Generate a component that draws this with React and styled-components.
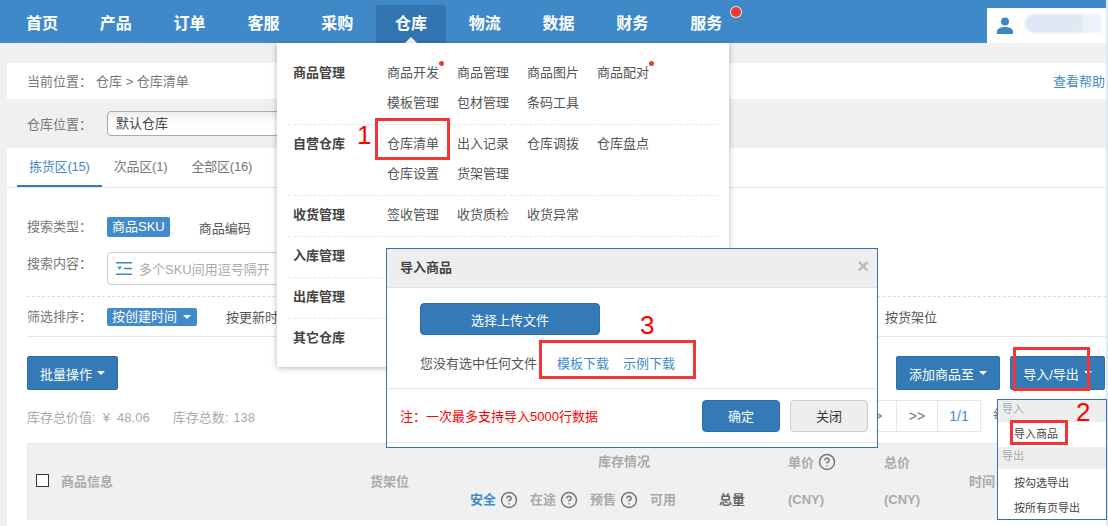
import styled, { createGlobalStyle } from "styled-components";
import { CircleHelp } from "lucide-react";

const GlobalStyle = createGlobalStyle`
  html, body {
    margin: 0;
    width: 1108px;
    height: 526px;
    overflow: hidden;
    background: #dfe9f5;
    font-family: "Liberation Sans", "Noto Sans CJK SC", sans-serif;
    font-size: 13px;
    color: #555;
  }
  * { box-sizing: border-box; }
`;

const COLON = "\uFF1A";

const NAV = ["首页", "产品", "订单", "客服", "采购", "仓库", "物流", "数据", "财务", "服务"];

const MENU = [
  { title: "商品管理", items: [["商品开发", true], ["商品管理"], ["商品图片"], ["商品配对", true], ["模板管理"], ["包材管理"], ["条码工具"]] },
  { title: "自营仓库", items: [["仓库清单"], ["出入记录"], ["仓库调拨"], ["仓库盘点"], ["仓库设置"], ["货架管理"]] },
  { title: "收货管理", items: [["签收管理"], ["收货质检"], ["收货异常"]] },
  { title: "入库管理", items: [] },
  { title: "出库管理", items: [] },
  { title: "其它仓库", items: [] },
];

export default function App() {
  return (
    <Page>
      <GlobalStyle />
      <Nav>
        {NAV.map((name) => (
          <NavItem key={name} $active={name === "仓库"} $badge={name === "服务"}>
            {name}
          </NavItem>
        ))}
        <UserBox>
          <svg width="16" height="17" viewBox="0 0 16 17" fill="#3c86c8">
            <circle cx="8" cy="4.5" r="4" />
            <path d="M0 17v-2.5C0 11.5 3.5 10 8 10s8 1.500 8 4.500V17z" />
          </svg>
          <BlurName />
        </UserBox>
      </Nav>

      <Breadcrumb>
        <Crumbs>
          <span>当前位置{COLON}</span>
          <span>仓库 &gt; 仓库清单</span>
        </Crumbs>
        <HelpLink>查看帮助</HelpLink>
      </Breadcrumb>

      <WarehouseRow>
        <span>仓库位置{COLON}</span>
        <WarehouseSelect>默认仓库</WarehouseSelect>
      </WarehouseRow>

      <Tabs>
        <Tab $active>拣货区(15)</Tab>
        <Tab>次品区(1)</Tab>
        <Tab>全部区(16)</Tab>
      </Tabs>

      <Content>
        <TypeRow>
          <FieldLabel>搜索类型{COLON}</FieldLabel>
          <Pill>商品SKU</Pill>
          <TypeOption>商品编码</TypeOption>
        </TypeRow>
        <SearchRow>
          <FieldLabel>搜索内容{COLON}</FieldLabel>
          <SearchBox>
            <svg width="16" height="13" viewBox="0 0 16 13">
              <path d="M0 .75h16M0 12.250h16M8 6.500h8" stroke="#3c86c8" strokeWidth="1.500" />
              <path d="M1 4.500h5L3.500 8z" fill="#25b8c4" />
            </svg>
            多个SKU间用逗号隔开
          </SearchBox>
        </SearchRow>
        <SortRow>
          <FieldLabel>筛选排序{COLON}</FieldLabel>
          <SortPill>
            按创建时间
            <Caret />
          </SortPill>
          <SortOption>按更新时间</SortOption>
          <SortOption>按商品SKU</SortOption>
          <ShelfOption>按货架位</ShelfOption>
        </SortRow>

        <ActionRow>
          <ActionButton>
            批量操作
            <Caret />
          </ActionButton>
          <ActionGroup>
            <ActionButton>
              添加商品至
              <Caret />
            </ActionButton>
            <ImportButton>
              导入/导出
              <Caret />
            </ImportButton>
          </ActionGroup>
        </ActionRow>

        <StatsRow>
          <Stats>
            <span>
              库存总价值:<StatValue $gap={7}>¥{"\u00A0\u00A0"}48.06</StatValue>
            </span>
            <span>
              库存总数:<StatValue $gap={5}>138</StatValue>
            </span>
          </Stats>
          <Pager>
            <PagerCell $w={37}>&gt;</PagerCell>
            <PagerCell $w={41}>&gt;&gt;</PagerCell>
            <PagerCell $w={43} $current>1/1</PagerCell>
            <PagerSize>每页50条</PagerSize>
          </Pager>
        </StatsRow>

        <TableHead>
          <CheckCol>
            <CheckBox />
          </CheckCol>
          <InfoCol>商品信息</InfoCol>
          <ShelfCol>货架位</ShelfCol>
          <StockCol>
            <StockTitle>库存情况</StockTitle>
            <StockRow>
              <StockCell $accent>安全<HelpIcon size={18} /></StockCell>
              <StockCell>在途<HelpIcon size={18} /></StockCell>
              <StockCell>预售<HelpIcon size={18} /></StockCell>
              <StockCell $w={69}>可用</StockCell>
              <StockCell $dark>总量</StockCell>
            </StockRow>
          </StockCol>
          <PriceCol $w={96}>
            <HeadLine>单价<HelpIcon size={18} /></HeadLine>
            <HeadLine>(CNY)</HeadLine>
          </PriceCol>
          <PriceCol $w={85}>
            <HeadLine>总价</HeadLine>
            <HeadLine>(CNY)</HeadLine>
          </PriceCol>
          <span>时间</span>
        </TableHead>
      </Content>

      <MegaMenu>
        {MENU.map((group) => (
          <MenuSection key={group.title}>
            <MenuTitle>{group.title}</MenuTitle>
            <MenuItems>
              {group.items.map(([label, dot]) => (
                <MenuLink key={label} $dot={dot}>
                  <span>{label}</span>
                </MenuLink>
              ))}
            </MenuItems>
          </MenuSection>
        ))}
      </MegaMenu>

      <Dialog>
        <DialogHead>
          导入商品
          <CloseMark>×</CloseMark>
        </DialogHead>
        <DialogBody>
          <UploadButton>选择上传文件</UploadButton>
          <FileRow>
            您没有选中任何文件
            <DownloadLink>模板下载</DownloadLink>
            <DownloadLink>示例下载</DownloadLink>
          </FileRow>
        </DialogBody>
        <DialogFoot>
          <Note>注{COLON}一次最多支持导入5000行数据</Note>
          <ConfirmButton>确定</ConfirmButton>
          <CloseButton>关闭</CloseButton>
        </DialogFoot>
      </Dialog>

      <ImportMenu>
        <ImportHead>导入</ImportHead>
        <ImportItem>导入商品</ImportItem>
        <ImportHead>导出</ImportHead>
        <ExportList>
          <ImportItem>按勾选导出</ImportItem>
          <ImportItem>按所有页导出</ImportItem>
        </ExportList>
      </ImportMenu>

      <RedBox $x={375} $y={118} $w={75} $h={42} />
      <RedBox $x={539} $y={340} $w={157} $h={39} />
      <RedBox $x={1013} $y={347} $w={77} $h={44} />
      <RedBox $x={1010} $y={420} $w={58} $h={25} />
      <RedNumber $x={357} $y={120}>1</RedNumber>
      <RedNumber $x={1076} $y={397}>2</RedNumber>
      <RedNumber $x={640} $y={310}>3</RedNumber>
    </Page>
  );
}

const Page = styled.div`
  position: relative;
  width: 1106px;
  height: 526px;
  background: #f0f0f0;
  overflow: visible;
`;

const Nav = styled.nav`
  display: flex;
  align-items: flex-end;
  gap: 3.8px;
  height: 43px;
  padding-left: 7px;
  background: #4089c9;
`;

const NavItem = styled.div`
  position: relative;
  width: 70px;
  height: 38px;
  padding-top: 7px;
  text-align: center;
  font-size: 16px;
  font-weight: 700;
  line-height: 24px;
  color: #fff;
  background: ${(p) => (p.$active ? "#3375b1" : "transparent")};
  border-radius: 3px 3px 0 0;

  ${(p) =>
    p.$active &&
    `&::after {
      content: "";
      position: absolute;
      left: 29px;
      bottom: 0;
      border: 6px solid transparent;
      border-top: 0;
      border-bottom-color: #fff;
    }`}

  ${(p) =>
    p.$badge &&
    `&::after {
      content: "";
      position: absolute;
      left: 60px;
      top: 2px;
      width: 10px;
      height: 10px;
      border-radius: 50%;
      background: #ee3a32;
      box-shadow: 0 0 0 1px #dfeaf5;
    }`}
`;

const UserBox = styled.div`
  display: flex;
  align-items: center;
  gap: 12px;
  width: 119px;
  height: 35px;
  margin-left: auto;
  padding: 0 0 0 10px;
  background: #fff;
`;

const BlurName = styled.div`
  width: 76px;
  height: 19px;
  margin-top: -5px;
  border-radius: 10px 0 0 10px;
  background: linear-gradient(90deg, #dde8f4 0%, #dfe9f4 75%, #eaf2fa 76%, #eef4fb 100%);
  filter: blur(1px);
`;

const Breadcrumb = styled.div`
  display: flex;
  justify-content: space-between;
  align-items: center;
  height: 36px;
  margin: 20px 0 0 7px;
  padding: 0 1px 1px 20px;
  background: #fff;
  color: #777;
`;

const Crumbs = styled.div`
  display: flex;
  gap: 4px;
`;

const HelpLink = styled.a`
  color: #428bca;
`;

const WarehouseRow = styled.div`
  display: flex;
  align-items: center;
  height: 49px;
  margin-left: 7px;
  padding-left: 20px;
  gap: 15px;
  color: #777;
`;

const WarehouseSelect = styled.div`
  width: 240px;
  height: 25px;
  padding-left: 8px;
  line-height: 24px;
  color: #444;
  border: 1px solid #aaa;
  border-radius: 4px;
  background: linear-gradient(#eee, #fff 50%);
`;

const Tabs = styled.div`
  display: flex;
  height: 40px;
  margin-left: 7px;
  padding-left: 10px;
  background: #fff;
  border-bottom: 1px solid #e6e6e6;
`;

const Tab = styled.div`
  height: 39px;
  padding: 0 12px;
  line-height: 38px;
  letter-spacing: -0.2px;
  color: ${(p) => (p.$active ? "#428bca" : "#777")};
  border-bottom: ${(p) => (p.$active ? "2px solid #337ab7" : "0")};
`;

const Content = styled.div`
  height: 338px;
  margin-left: 7px;
  padding: 29px 0 0 20px;
  background: #fff;
`;

const FieldLabel = styled.span`
  width: 80px;
  flex: none;
  line-height: 18px;
  color: #777;
`;

const TypeRow = styled.div`
  display: flex;
  align-items: center;
  height: 20px;
`;

const Pill = styled.span`
  height: 20px;
  padding: 0 5px;
  line-height: 20px;
  color: #fff;
  background: #428bca;
  border-radius: 2px;
`;

const TypeOption = styled.span`
  margin-left: 29px;
  color: #555;
`;

const SearchRow = styled.div`
  display: flex;
  height: 33px;
  margin-top: 15px;

  ${FieldLabel} {
    line-height: 24px;
  }
`;

const SearchBox = styled.div`
  display: flex;
  align-items: center;
  gap: 7px;
  width: 240px;
  height: 33px;
  padding-left: 8px;
  color: #aaa;
  border: 1px solid #ccc;
  border-radius: 4px;
`;

const SortRow = styled.div`
  display: flex;
  align-items: center;
  height: 41px;
  margin-top: 11px;
  padding-right: 169px;
  border-top: 1px dashed #ddd;
  border-bottom: 1px solid #e5e5e5;
`;

const SortPill = styled(Pill)`
  display: flex;
  align-items: center;
  gap: 5px;
  height: 18px;
  padding: 0 6px 0 5px;
  line-height: 18px;
`;

const SortOption = styled.span`
  margin-left: 29px;
  color: #555;
`;

const ShelfOption = styled(SortOption)`
  margin-left: auto;
`;

const Caret = styled.i`
  display: inline-block;
  width: 0;
  height: 0;
  margin-left: 1px;
  border: 4px solid transparent;
  border-top-color: #fff;
  border-bottom: 0;
`;

const ActionRow = styled.div`
  display: flex;
  justify-content: space-between;
  height: 34px;
  margin-top: 19px;
`;

const ActionGroup = styled.div`
  display: flex;
  gap: 10px;
  padding-right: 1px;
`;

const ActionButton = styled.button`
  display: flex;
  align-items: center;
  justify-content: center;
  gap: 4px;
  height: 34px;
  padding: 0 12px;
  font: inherit;
  color: #fff;
  background: #337ab7;
  border: 1px solid #2e6da4;
  border-radius: 2px;
`;

const ImportButton = styled(ActionButton)`
  width: 95px;
  padding: 0;
`;

const StatsRow = styled.div`
  display: flex;
  justify-content: space-between;
  height: 32px;
  margin-top: 10px;
`;

const Stats = styled.div`
  display: flex;
  align-items: center;
  gap: 23px;
  color: #aaa;
`;

const StatValue = styled.span`
  margin-left: ${(p) => p.$gap}px;
`;

const Pager = styled.div`
  display: flex;
  height: 32px;
  font-size: 14px;
`;

const PagerCell = styled.span`
  width: ${(p) => p.$w}px;
  line-height: 30px;
  text-align: center;
  color: ${(p) => (p.$current ? "#428bca" : "#777")};
  border: 1px solid #e5e5e5;
  border-left-width: 0;
`;

const PagerSize = styled.span`
  width: 125px;
  padding-left: 12px;
  white-space: nowrap;
  line-height: 30px;
  font-size: 13px;
  color: #777;
`;

const TableHead = styled.div`
  display: flex;
  align-items: center;
  height: 77px;
  margin-top: 11px;
  padding-bottom: 3px;
  font-weight: 700;
  color: #aaa;
  background: #f0f0f0;
  border-top: 1px solid #e8e8e8;
  border-left: 1px solid #e8e8e8;
`;

const CheckCol = styled.div`
  width: 33px;
  padding-left: 8px;
`;

const CheckBox = styled.div`
  width: 13px;
  height: 13px;
  background: #fff;
  border: 1px solid #333;
`;

const InfoCol = styled.div`
  width: 309px;
`;

const ShelfCol = styled.div`
  width: 100px;
`;

const StockCol = styled.div`
  width: 318px;
`;

const StockTitle = styled.div`
  height: 38px;
  padding-left: 128px;
  line-height: 38px;
`;

const StockRow = styled.div`
  display: flex;
  height: 38px;
  line-height: 38px;
`;

const StockCell = styled.span`
  display: flex;
  align-items: center;
  gap: 4px;
  width: ${(p) => p.$w || 60}px;
  color: ${(p) => (p.$accent ? "#428bca" : p.$dark ? "#666" : "#aaa")};
`;

const HelpIcon = styled(CircleHelp)`
  flex: none;
  color: #777;
  stroke-width: 2;
`;

const PriceCol = styled.div`
  width: ${(p) => p.$w}px;
`;

const HeadLine = styled.div`
  display: flex;
  align-items: center;
  gap: 4px;
  height: 38px;
`;

const MegaMenu = styled.div`
  position: absolute;
  left: 277px;
  top: 43px;
  width: 452px;
  height: 324px;
  padding-top: 11px;
  background: #fff;
  box-shadow: 0 1px 6px rgba(40, 50, 80, 0.35);
`;

const MenuSection = styled.div`
  display: flex;
  margin: 0 11px;
  padding: 4px 0 6px 5px;
  border-bottom: 1px dashed #e8e8e8;

  &:last-child {
    border-bottom: 0;
  }
`;

const MenuTitle = styled.div`
  width: 94px;
  flex: none;
  font-weight: 700;
  line-height: 30px;
  color: #444;
`;

const MenuItems = styled.div`
  display: flex;
  flex-wrap: wrap;
  width: 280px;
  min-height: 30px;
`;

const MenuLink = styled.div`
  width: 70px;
  line-height: 30px;
  color: #555;

  span {
    position: relative;
  }

  ${(p) =>
    p.$dot &&
    `span::after {
      content: "";
      position: absolute;
      right: -5px;
      top: -4px;
      width: 5px;
      height: 5px;
      border-radius: 50%;
      background: #ee3a32;
    }`}
`;

const Dialog = styled.div`
  position: absolute;
  left: 386px;
  top: 248px;
  width: 492px;
  height: 200px;
  background: #fff;
  border: 1px solid #3a70a8;
`;

const DialogHead = styled.div`
  display: flex;
  justify-content: space-between;
  align-items: center;
  height: 39px;
  padding: 0 8px 3px 13px;
  font-weight: 700;
  color: #444;
  background: #eee;
  border-bottom: 1px solid #e2e2e2;
`;

const CloseMark = styled.span`
  font-size: 20px;
  color: #bbb;
`;

const DialogBody = styled.div`
  height: 101px;
  padding: 15px 0 0 33px;
  border-bottom: 1px solid #e2e2e2;
`;

const UploadButton = styled.button`
  display: block;
  width: 180px;
  height: 32px;
  font: inherit;
  color: #fff;
  background: #337ab7;
  border: 1px solid #2e6da4;
  border-radius: 4px;
`;

const FileRow = styled.div`
  display: flex;
  gap: 14px;
  margin-top: 20px;
  line-height: 18px;
  color: #555;
`;

const DownloadLink = styled.a`
  color: #428bca;

  &:first-of-type {
    margin-left: 6px;
  }
`;

const DialogFoot = styled.div`
  display: flex;
  align-items: center;
  gap: 10px;
  height: 54px;
  padding: 0 9px 0 13px;
  border-bottom: 1px solid #e8e8e8;
`;

const Note = styled.span`
  margin-right: auto;
  color: #f00;
`;

const ConfirmButton = styled.button`
  width: 78px;
  height: 32px;
  font: inherit;
  color: #fff;
  background: #337ab7;
  border: 1px solid #2e6da4;
  border-radius: 4px;
`;

const CloseButton = styled(ConfirmButton)`
  color: #333;
  background: #eee;
  border-color: #ccc;
`;

const ImportMenu = styled.div`
  position: absolute;
  left: 997px;
  top: 399px;
  width: 110px;
  height: 121px;
  font-size: 11px;
  background: #fff;
  border: 1px solid #3a70a8;
`;

const ImportHead = styled.div`
  height: 22px;
  padding-left: 4px;
  line-height: 18px;
  color: #aaa;
  background: #eee;
`;

const ImportItem = styled.div`
  height: 25px;
  padding-left: 16px;
  line-height: 25px;
  color: #444;
`;

const ExportList = styled.div`
  padding-top: 2px;
`;

const RedBox = styled.div`
  position: absolute;
  left: ${(p) => p.$x}px;
  top: ${(p) => p.$y}px;
  width: ${(p) => p.$w}px;
  height: ${(p) => p.$h}px;
  border: 3px solid #f43535;
`;

const RedNumber = styled.div`
  position: absolute;
  left: ${(p) => p.$x}px;
  top: ${(p) => p.$y}px;
  font-size: 26px;
  line-height: 30px;
  color: #f00;
`;
